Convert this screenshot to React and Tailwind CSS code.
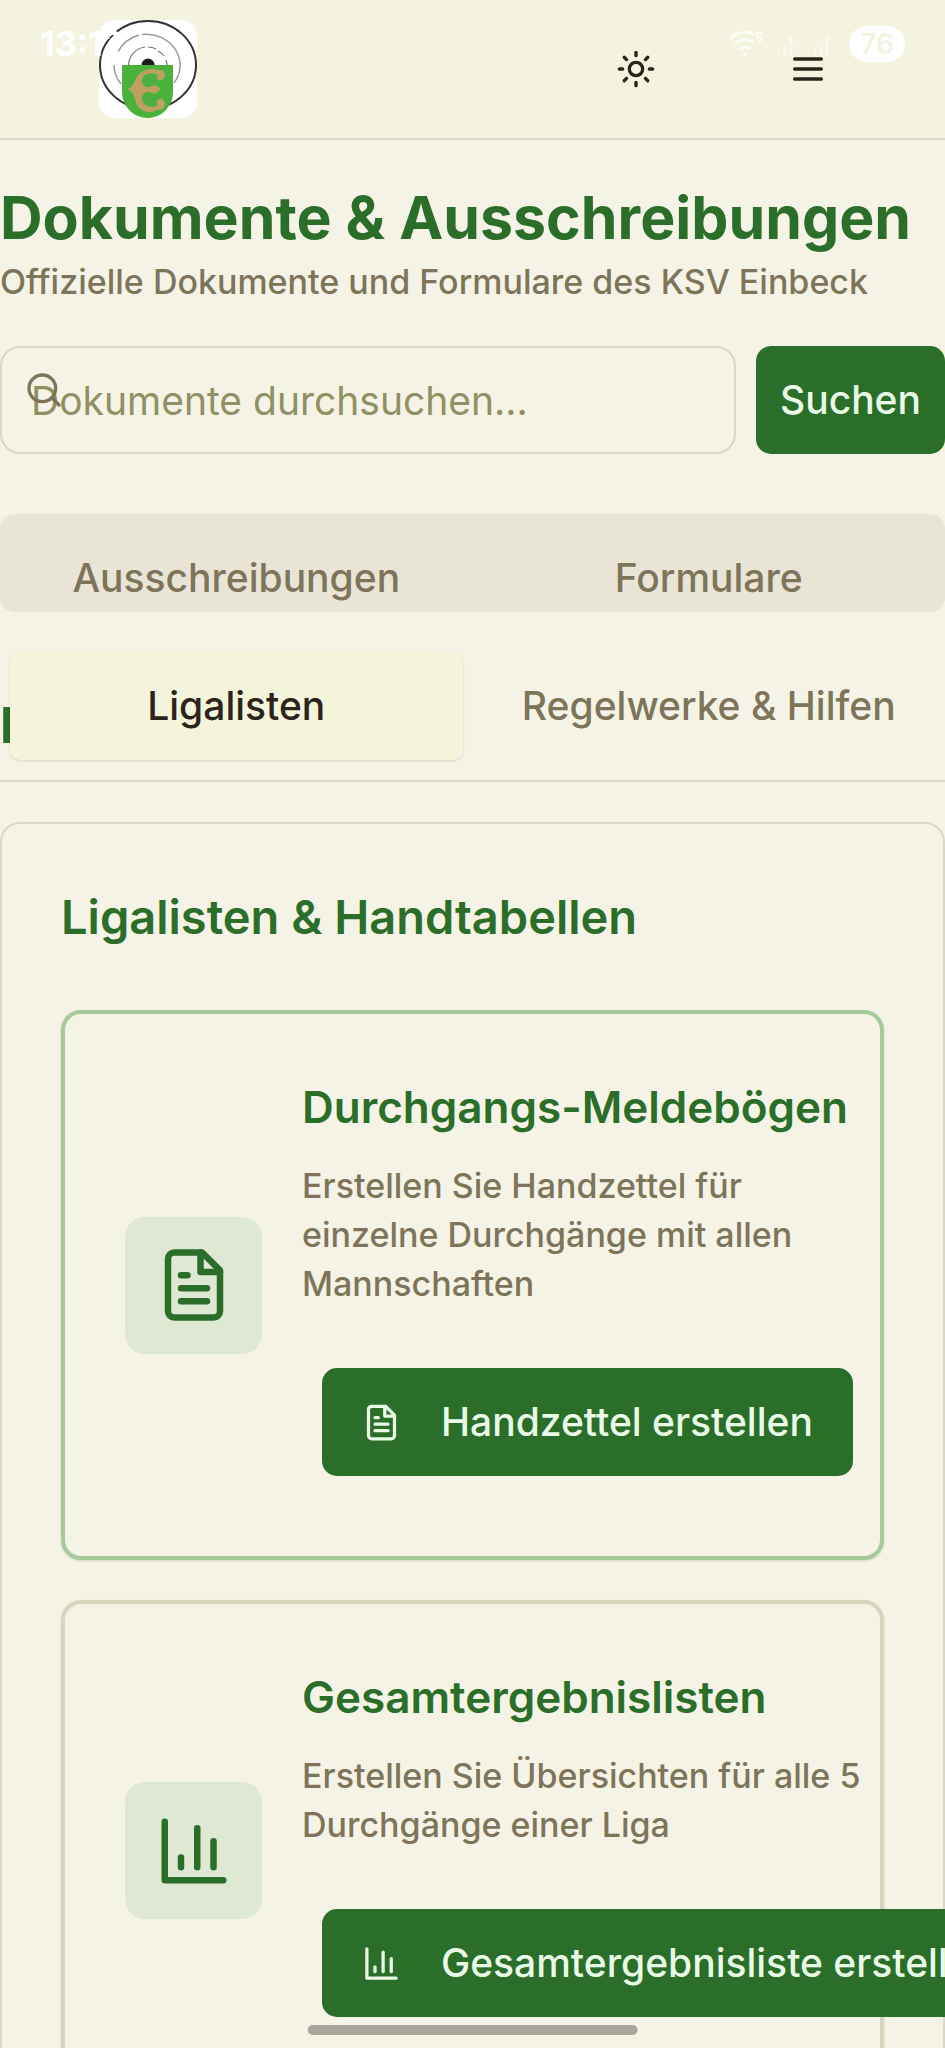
import { Search, Sun } from "lucide-react";

function MenuIcon({ className }) {
  return (
    <svg className={className} viewBox="0 0 24 24" fill="none" stroke="currentColor" strokeWidth="2" strokeLinecap="round" aria-hidden="true">
      <path d="M4 6h16M4 12h16M4 18h16" />
    </svg>
  );
}

function FileIcon({ className }) {
  return (
    <svg className={className} viewBox="0 0 24 24" fill="none" stroke="currentColor" strokeWidth="2" strokeLinecap="round" strokeLinejoin="round" aria-hidden="true">
      <path d="M14.5 2H6a2 2 0 0 0-2 2v16a2 2 0 0 0 2 2h12a2 2 0 0 0 2-2V7.5L14.5 2z" />
      <path d="M14 2v6h6" />
      <path d="M16 13H8M16 17H8M10 9H8" />
    </svg>
  );
}

function ChartIcon({ className }) {
  return (
    <svg className={className} viewBox="0 0 24 24" fill="none" stroke="currentColor" strokeWidth="2" strokeLinecap="round" strokeLinejoin="round" aria-hidden="true">
      <path d="M3 3v18h18" />
      <path d="M8 17v-3" />
      <path d="M13 17V5" />
      <path d="M18 17V9" />
    </svg>
  );
}

function Logo() {
  return (
    <svg className="size-[98px] rounded-2xl bg-white" viewBox="0 0 98 98" role="img" aria-label="KSV Einbeck">
      <ellipse cx="49" cy="45" rx="48" ry="44" fill="none" stroke="#333" strokeWidth="2" />
      <path d="M22 64A34 31 0 0 1 15 45M19 32A34 31 0 0 1 40 15M43 14.500A34 31 0 0 1 75 63" fill="none" stroke="#999" strokeWidth="1.500" />
      <path d="M30 48A19 18 0 0 1 46 27M49 27A19 18 0 0 1 57 29M59 31A19 18 0 0 1 65 36M67 40A19 18 0 0 1 68 46" fill="none" stroke="#777" strokeWidth="1.200" />
      <ellipse cx="49" cy="45" rx="6.500" ry="6.500" fill="#1c1c1c" />
      <path d="M23 45h51v27a25.500 26 0 0 1-51 0z" fill="#49b13c" />
      <path
        d="M28 69C33 68 34 65 36 60C40 52 46 49 53 49C57 49 59 51 62 50C67 50 68 59 62 60C57 61 57 56 59 55C52 51 43 54 43 61C43 67 50 69 55 65L58 66L62 69L58 72L55 74C50 70 43 72 43 78C43 86 52 89 59 85C56 82 59 78 63 79C68 82 66 90 60 90C56 90 54 93 49 92C41 91 37 85 36 79C34 73 32 70 28 69Z"
        fill="#bfa063"
      />
    </svg>
  );
}

function SignalIcon() {
  return (
    <svg className="h-6 w-6 opacity-60" viewBox="0 0 24 24" stroke="currentColor" strokeWidth="3" strokeLinecap="round" aria-hidden="true">
      <path d="M2 22v-2M8 22v-7M14 22V6" />
      <path d="M21 22V2" strokeOpacity=".3" />
    </svg>
  );
}

function StatusBar() {
  return (
    <div className="pointer-events-none absolute inset-x-0 top-6 z-20 flex h-10 items-center justify-between px-10 text-white">
      <span className="text-[34px] leading-10 font-bold">13:12</span>
      <div className="flex items-center gap-3">
        <svg className="h-7 w-9 opacity-80" viewBox="0 0 36 28" fill="none" stroke="currentColor" strokeWidth="3" aria-hidden="true">
          <path d="M1 9a21 21 0 0 1 24-5M6 14a14 14 0 0 1 18-2M11 19a8 8 0 0 1 10 0" />
          <circle cx="16" cy="24" r="2" fill="currentColor" stroke="none" />
          <path d="M34 3h-6v4c6-2 7 5 0 5" strokeWidth="2" />
        </svg>
        <SignalIcon />
        <SignalIcon />
        <span className="flex h-9 w-14 items-center justify-center rounded-full bg-white text-[28px] leading-9 font-semibold text-[#f4f3df]">76</span>
      </div>
    </div>
  );
}

function Tab({ active, children }) {
  return (
    <button
      type="button"
      role="tab"
      aria-selected={Boolean(active)}
      className={
        active
          ? "h-[108px] rounded-[10px] bg-[#f4f4da] text-[39px] font-medium whitespace-nowrap text-[#2a241b] shadow"
          : "h-[108px] rounded-[10px] text-[39px] font-medium whitespace-nowrap text-[#7d7459]"
      }
    >
      {children}
    </button>
  );
}

function ListCard({ icon: Icon, title, text, action, highlight }) {
  return (
    <article
      className={
        highlight
          ? "flex items-center gap-10 rounded-[20px] border-4 border-[#a5c99b] p-[60px] shadow-sm"
          : "flex items-center gap-10 rounded-[20px] border-4 border-[#d8d5be] p-[60px] shadow-sm"
      }
    >
      <div className="flex size-[137px] shrink-0 items-center justify-center rounded-[20px] bg-[#dfe8d3] text-[#2b6e29]">
        <Icon className="size-[78px]" />
      </div>
      <div className="flex-1">
        <h3 className="text-[44px] leading-[66px] font-semibold text-[#2b6e29]">{title}</h3>
        <p className="mt-[21px] text-[34px] leading-[49px] font-medium text-[#7d7459]">{text}</p>
        <div className="mt-10 flex p-5">
          <button type="button" className="flex h-[108px] items-center gap-10 rounded-[15px] bg-[#2b6e29] px-10 text-[39px] font-medium whitespace-nowrap text-[#e9fbe6]">
            <Icon className="size-[39px] shrink-0" />
            {action}
          </button>
        </div>
      </div>
    </article>
  );
}

export default function App() {
  return (
    <div className="relative h-screen overflow-hidden bg-[#f5f3e5] font-['Inter',sans-serif] text-[#2a241b]">
      <StatusBar />
      <header className="flex h-[140px] items-center justify-between border-b-2 border-[#dad8c4] bg-[#f4f3df] pr-[83px] pl-[99px]">
        <a href="#start">
          <Logo />
        </a>
        <div className="flex gap-16">
          <button type="button" aria-label="Design wechseln" className="flex size-[108px] items-center justify-center">
            <Sun className="size-10" />
          </button>
          <button type="button" aria-label="Menü" className="flex size-[108px] items-center justify-center">
            <MenuIcon className="size-10" />
          </button>
        </div>
      </header>

      <main className="pt-10">
        <h1 className="text-[59px] leading-[76px] font-bold whitespace-nowrap text-[#2b6e29]">Dokumente &amp; Ausschreibungen</h1>
        <p className="text-[34px] leading-[52px] font-medium text-[#7d7459]">Offizielle Dokumente und Formulare des KSV Einbeck</p>

        <form className="mt-[38px] flex gap-5" onSubmit={(e) => e.preventDefault()}>
          <div className="relative min-w-0 flex-1">
            <Search className="absolute top-6 left-6 size-10 text-[#7d7459]" />
            <input
              type="search"
              aria-label="Dokumente durchsuchen"
              placeholder="Dokumente durchsuchen..."
              className="h-[108px] w-full rounded-[20px] border-2 border-[#dad8c4] bg-transparent px-[29px] text-[39px] placeholder:text-[#8f9063]"
            />
          </div>
          <button type="submit" className="h-[108px] rounded-[15px] bg-[#2b6e29] px-6 text-[39px] font-medium text-[#e9fbe6]">
            Suchen
          </button>
        </form>

        <div role="tablist" className="relative z-10 mt-[60px] grid h-[98px] grid-cols-2 content-start gap-5 rounded-[15px] bg-[#e8e4d6] p-[10px]">
          <Tab>Ausschreibungen</Tab>
          <Tab>Formulare</Tab>
          <Tab active>Ligalisten</Tab>
          <Tab>Regelwerke &amp; Hilfen</Tab>
        </div>

        <div className="border-b-2 border-[#dad8c4] pt-[82px] pb-[22px]">
          <h2 className="text-[49px] leading-[64px] font-bold text-[#2b6e29]">I</h2>
        </div>

        <section className="mt-10 rounded-[20px] border-2 border-[#dad8c4] px-[59px] py-[60px]">
          <h2 className="mb-[60px] text-[47px] leading-[66px] font-semibold text-[#2b6e29]">Ligalisten &amp; Handtabellen</h2>
          <div className="flex flex-col gap-10">
            <ListCard
              highlight
              icon={FileIcon}
              title="Durchgangs-Meldebögen"
              text="Erstellen Sie Handzettel für einzelne Durchgänge mit allen Mannschaften"
              action="Handzettel erstellen"
            />
            <ListCard
              icon={ChartIcon}
              title="Gesamtergebnislisten"
              text="Erstellen Sie Übersichten für alle 5 Durchgänge einer Liga"
              action="Gesamtergebnisliste erstellen"
            />
          </div>
        </section>
      </main>

      <div className="fixed bottom-[13px] left-1/2 z-30 h-[10px] w-[35%] -translate-x-1/2 rounded-full bg-[#a9a79c]" />
    </div>
  );
}
